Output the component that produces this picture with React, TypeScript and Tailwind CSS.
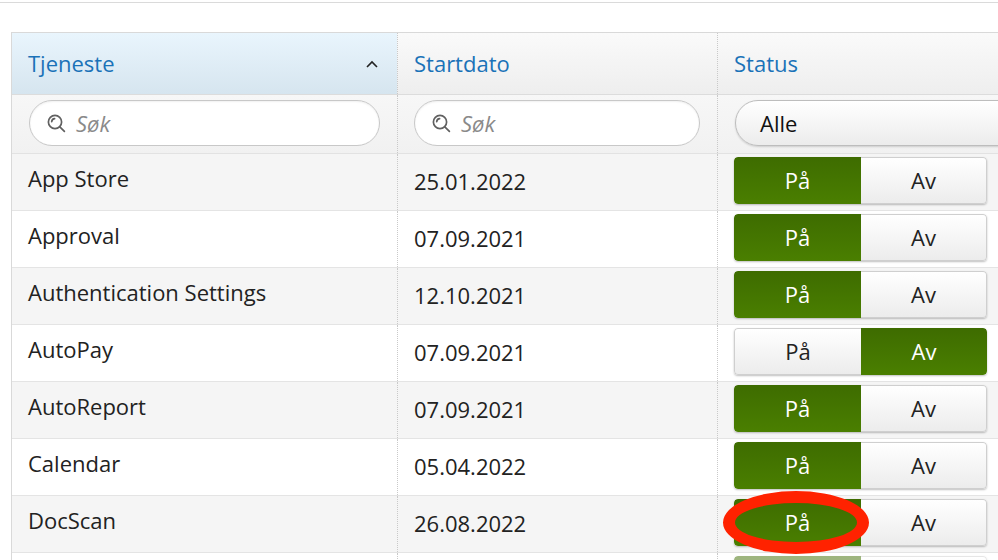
import React from "react";

type Row = {
  name: string;
  date: string;
  on: boolean;
};

const rows: Row[] = [
  { name: "App Store", date: "25.01.2022", on: true },
  { name: "Approval", date: "07.09.2021", on: true },
  { name: "Authentication Settings", date: "12.10.2021", on: true },
  { name: "AutoPay", date: "07.09.2021", on: false },
  { name: "AutoReport", date: "07.09.2021", on: true },
  { name: "Calendar", date: "05.04.2022", on: true },
  { name: "DocScan", date: "26.08.2022", on: true },
  { name: "", date: "", on: true },
];

function SearchIcon() {
  return (
    <svg width="19" height="19" viewBox="0 0 19 19" fill="none" stroke="#606060" strokeWidth="1.7" strokeLinecap="round">
      <circle cx="8" cy="8" r="6.6" />
      <path d="M4.7 7.6a3.3 3.3 0 0 1 2.9-2.9" />
      <path d="M12.8 12.8l4.6 4.6" />
    </svg>
  );
}

function SearchInput() {
  return (
    <div className="flex h-[46px] w-full items-center gap-[10px] rounded-full border border-[#c8c8c8] bg-white pl-[17px] shadow-[inset_0_1px_2px_rgba(0,0,0,0.06)]">
      <SearchIcon />
      <span className="text-[22px] italic text-[#8a8a8a]">Søk</span>
    </div>
  );
}

// På / Av toggle
function Toggle({ on, faded }: { on: boolean; faded?: boolean }) {
  const active = "bg-gradient-to-b from-[#3e6c00] to-[#4a7f00] text-white";
  const idle = "bg-gradient-to-b from-white to-[#ececec] text-[#222] border border-[#cfcfcf]";
  return (
    <div
      className={`flex h-[47px] w-[253px] overflow-hidden rounded-[4px] text-[22px] shadow-[0_1px_2px_rgba(0,0,0,0.25)] ${
        faded ? "opacity-50" : ""
      }`}
    >
      <div className={`flex w-[127px] items-center justify-center rounded-l-[4px] ${on ? active : idle + " border-r-0"}`}>
        {faded ? null : "På"}
      </div>
      <div className={`flex flex-1 items-center justify-center rounded-r-[4px] ${on ? idle + " border-l-0" : active}`}>
        {faded ? null : "Av"}
      </div>
    </div>
  );
}

export default function App() {
  return (
    <div
      className="relative h-[560px] w-[998px] overflow-hidden bg-white text-[#222]"
      style={{ fontFamily: '"Open Sans", "Noto Sans", sans-serif' }}
    >
      <div className="mt-[2px] h-px w-full bg-[#dadada]" />

      <div className="ml-[11px] mt-[29px] w-[1010px] border-l border-t border-[#d9d9d9]">
        {/* header */}
        <div className="grid h-[62px] grid-cols-[385px_320px_304px] border-b border-[#dcdcdc] text-[22px] text-[#1a72b8]">
          <div className="flex items-center justify-between bg-gradient-to-b from-[#e9f5fd] to-[#d6e5ef] pl-[16px] pr-[18px]">
            <span>Tjeneste</span>
            <svg width="14" height="10" viewBox="0 0 14 10" fill="none" stroke="#222" strokeWidth="1.6">
              <path d="M2 8l5-5 5 5" />
            </svg>
          </div>
          <div className="flex items-center border-l border-dotted border-[#c9c9c9] bg-gradient-to-b from-[#fafafa] to-[#eeeeee] pl-[16px]">
            Startdato
          </div>
          <div className="flex items-center border-l border-dotted border-[#c9c9c9] bg-gradient-to-b from-[#fafafa] to-[#eeeeee] pl-[16px]">
            Status
          </div>
        </div>

        {/* filter row */}
        <div className="grid h-[59px] grid-cols-[385px_320px_304px] border-b border-[#e2e2e2] bg-gradient-to-b from-[#f7f7f7] to-[#f1f1f1]">
          <div className="flex items-start pl-[17px] pr-[17px] pt-[5px]">
            <SearchInput />
          </div>
          <div className="flex items-start border-l border-dotted border-[#c9c9c9] pl-[16px] pr-[17px] pt-[5px]">
            <SearchInput />
          </div>
          <div className="flex items-start border-l border-dotted border-[#c9c9c9] pl-[17px] pt-[5px]">
            <div className="flex h-[46px] w-full items-center rounded-l-full border border-[#bdbdbd] bg-gradient-to-b from-white to-[#ececec] pl-[24px] text-[22px] text-[#111] shadow-[0_1px_2px_rgba(0,0,0,0.15)]">
              Alle
            </div>
          </div>
        </div>

        {/* body */}
        {rows.map((r, i) => (
          <div
            key={i}
            className={`grid h-[57px] grid-cols-[385px_320px_304px] border-b border-[#e4e4e4] text-[22px] ${
              i % 2 === 0 ? "bg-[#f5f5f5]" : "bg-white"
            }`}
          >
            <div className="pl-[16px] pt-[9px] leading-[30px]">{r.name}</div>
            <div className="border-l border-dotted border-[#c9c9c9] pl-[16px] pt-[12px] leading-[30px]">{r.date}</div>
            <div className="border-l border-dotted border-[#c9c9c9] pl-[16px] pt-[3px]">
              {r.name ? <Toggle on={r.on} /> : <Toggle on={r.on} faded />}
            </div>
          </div>
        ))}
      </div>

      {/* red annotation ring */}
      <div className="pointer-events-none absolute left-[723px] top-[491px] h-[63px] w-[146px] rounded-[50%] border-[12px] border-[#ff2200]" />
    </div>
  );
}
